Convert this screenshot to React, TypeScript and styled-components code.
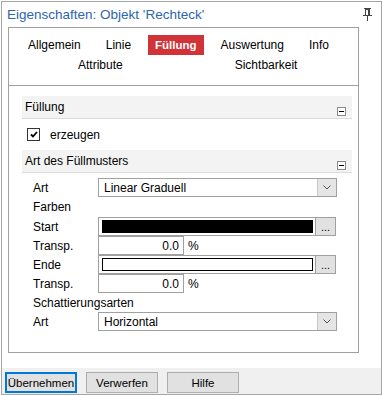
import React from 'react';
import styled, { createGlobalStyle } from 'styled-components';

const GlobalStyle = createGlobalStyle`
  html, body {
    margin: 0;
    padding: 0;
    background: #ffffff;
  }
  body {
    font-family: "Liberation Sans", Arial, sans-serif;
    font-size: 12px;
    color: #000;
  }
`;

const Window = styled.div`
  box-sizing: border-box;
  width: 381px;
  height: 394px;
  margin: 1px 0 0 1px;
  border: 1px solid #a6a6a6;
  display: flex;
  flex-direction: column;
  background: #fff;
`;

const TitleBar = styled.div`
  height: 25px;
  display: flex;
  align-items: center;
  justify-content: space-between;
  padding: 0 9px 0 5px;
  color: #2e65ab;
  font-size: 13.5px;
`;

const Panel = styled.div`
  box-sizing: border-box;
  width: 351px;
  height: 326px;
  margin-left: 6px;
  border: 1px solid #a0a0a0;
`;

const TabArea = styled.div`
  box-sizing: border-box;
  height: 58px;
  border-bottom: 1px solid #a0a0a0;
  padding-top: 7px;
`;

const TabRow = styled.div<{ $indent: number; $gap: number }>`
  display: flex;
  height: 20px;
  align-items: center;
  padding-left: ${({ $indent }) => $indent}px;
  gap: ${({ $gap }) => $gap}px;
`;

const Tab = styled.div<{ $active?: boolean }>`
  height: 20px;
  line-height: 20px;
  padding: 0 ${({ $active }) => ($active ? 7 : 8)}px;
  font-size: ${({ $active }) => ($active ? 11.5 : 12)}px;
  background: ${({ $active }) => ($active ? '#d13438' : 'transparent')};
  color: ${({ $active }) => ($active ? '#fff' : '#000')};
  font-weight: ${({ $active }) => ($active ? 'bold' : 'normal')};
`;

const Content = styled.div`
  padding: 10px 6px 0 13px;
`;

const SectionHeader = styled.div`
  height: 22px;
  background: #f3f3f3;
  border-bottom: 1px solid #dcdcdc;
  display: flex;
  align-items: center;
  justify-content: space-between;
  padding: 0 6px 0 3px;
`;

const Collapse = styled.span`
  box-sizing: border-box;
  width: 9px;
  height: 9px;
  border: 1px solid #8a8a8a;
  background: #fff;
  display: flex;
  align-items: center;
  justify-content: center;
  margin-top: 9px;

  &::after {
    content: '';
    width: 5px;
    height: 1px;
    background: #000;
  }
`;

const CheckRow = styled.div`
  height: 31px;
  display: flex;
  align-items: center;
  padding-left: 5px;
  gap: 10px;
`;

const CheckBox = styled.span`
  box-sizing: border-box;
  width: 13px;
  height: 13px;
  border: 1px solid #333;
  display: flex;
  align-items: center;
  justify-content: center;
`;

const Grid = styled.div`
  padding-top: 5px;
`;

const Row = styled.div<{ $tall?: boolean }>`
  display: flex;
  height: ${({ $tall }) => ($tall ? 20 : 19)}px;
  align-items: stretch;
`;

const Label = styled.div<{ $wide?: boolean }>`
  width: ${({ $wide }) => ($wide ? 'auto' : '65px')};
  padding-left: 11px;
  display: flex;
  align-items: center;
`;

const Combo = styled.div`
  box-sizing: border-box;
  width: 239px;
  border: 1px solid #a0a0a0;
  display: flex;
  align-items: center;
  justify-content: space-between;
  padding-left: 5px;
`;

const DropButton = styled.span`
  width: 18px;
  align-self: stretch;
  background: #e5e5e5;
  border-left: 1px solid #c8c8c8;
  display: flex;
  align-items: center;
  justify-content: center;
`;

const ColorField = styled.div`
  box-sizing: border-box;
  width: 218px;
  border: 1px solid #a0a0a0;
  padding: 2px 2px 2px 3px;
  display: flex;
`;

const Swatch = styled.div<{ $color: string }>`
  flex: 1;
  box-sizing: border-box;
  background: ${({ $color }) => $color};
  border: 1px solid #000;
`;

const DotsButton = styled.div`
  box-sizing: border-box;
  width: 21px;
  margin-left: -1px;
  border: 1px solid #a0a0a0;
  background: #e1e1e1;
  display: flex;
  align-items: flex-end;
  justify-content: center;
  padding-bottom: 4px;
  font-size: 11px;
  line-height: 8px;
`;

const NumberBox = styled.div`
  box-sizing: border-box;
  width: 86px;
  border: 1px solid #a0a0a0;
  display: flex;
  align-items: center;
  justify-content: flex-end;
  padding-right: 4px;
`;

const Unit = styled.div`
  display: flex;
  align-items: center;
  padding-left: 4px;
`;

const BottomBar = styled.div`
  margin-top: auto;
  height: 26px;
  background: #f0f0f0;
  display: flex;
  align-items: flex-start;
  gap: 9px;
  padding: 4px 0 0 3px;
  box-sizing: border-box;
`;

const Button = styled.button<{ $primary?: boolean }>`
  box-sizing: border-box;
  width: 72px;
  height: 21px;
  padding: 0;
  font-family: inherit;
  font-size: 11.5px;
  color: #000;
  background: #e1e1e1;
  border: ${({ $primary }) => ($primary ? '2px solid #0078d7' : '1px solid #adadad')};
`;

const Pin = () => (
  <svg width="9" height="13" viewBox="0 0 9 13">
    <rect x="1" y="0" width="7" height="1" fill="#444" />
    <rect x="2.5" y="1.5" width="4" height="6" fill="none" stroke="#444" />
    <rect x="5" y="2" width="1" height="6" fill="#444" />
    <rect x="0" y="7" width="9" height="1" fill="#444" />
    <rect x="4" y="8" width="1" height="5" fill="#444" />
  </svg>
);

const Chevron = () => (
  <svg width="8" height="5" viewBox="0 0 8 5">
    <path d="M0.5 0.5 L4 4 L7.5 0.5" fill="none" stroke="#555" strokeWidth="1" />
  </svg>
);

const Check = () => (
  <svg width="8" height="7" viewBox="0 0 8 7">
    <path d="M1 3.5 L3 5.5 L7 1" fill="none" stroke="#000" strokeWidth="1.8" />
  </svg>
);

const ColorRow = ({ label, color }: { label: string; color: string }) => (
  <Row>
    <Label>{label}</Label>
    <ColorField>
      <Swatch $color={color} />
    </ColorField>
    <DotsButton>...</DotsButton>
  </Row>
);

const TranspRow = () => (
  <Row>
    <Label>Transp.</Label>
    <NumberBox>0.0</NumberBox>
    <Unit>%</Unit>
  </Row>
);

const ComboRow = ({ label, value }: { label: string; value: string }) => (
  <Row>
    <Label>{label}</Label>
    <Combo>
      <span>{value}</span>
      <DropButton>
        <Chevron />
      </DropButton>
    </Combo>
  </Row>
);

export default function App() {
  return (
    <>
      <GlobalStyle />
      <Window>
        <TitleBar>
          <span>Eigenschaften: Objekt 'Rechteck'</span>
          <Pin />
        </TitleBar>
        <Panel>
          <TabArea>
            <TabRow $indent={11} $gap={9}>
              <Tab>Allgemein</Tab>
              <Tab>Linie</Tab>
              <Tab $active>Füllung</Tab>
              <Tab>Auswertung</Tab>
              <Tab>Info</Tab>
            </TabRow>
            <TabRow $indent={61} $gap={96}>
              <Tab>Attribute</Tab>
              <Tab>Sichtbarkeit</Tab>
            </TabRow>
          </TabArea>
          <Content>
            <SectionHeader>
              <span>Füllung</span>
              <Collapse />
            </SectionHeader>
            <CheckRow>
              <CheckBox>
                <Check />
              </CheckBox>
              <span>erzeugen</span>
            </CheckRow>
            <SectionHeader>
              <span>Art des Füllmusters</span>
              <Collapse />
            </SectionHeader>
            <Grid>
              <ComboRow label="Art" value="Linear Graduell" />
              <Row $tall>
                <Label $wide>Farben</Label>
              </Row>
              <ColorRow label="Start" color="#000" />
              <TranspRow />
              <ColorRow label="Ende" color="#fff" />
              <TranspRow />
              <Row>
                <Label $wide>Schattierungsarten</Label>
              </Row>
              <ComboRow label="Art" value="Horizontal" />
            </Grid>
          </Content>
        </Panel>
        <BottomBar>
          <Button $primary>Übernehmen</Button>
          <Button>Verwerfen</Button>
          <Button>Hilfe</Button>
        </BottomBar>
      </Window>
    </>
  );
}
